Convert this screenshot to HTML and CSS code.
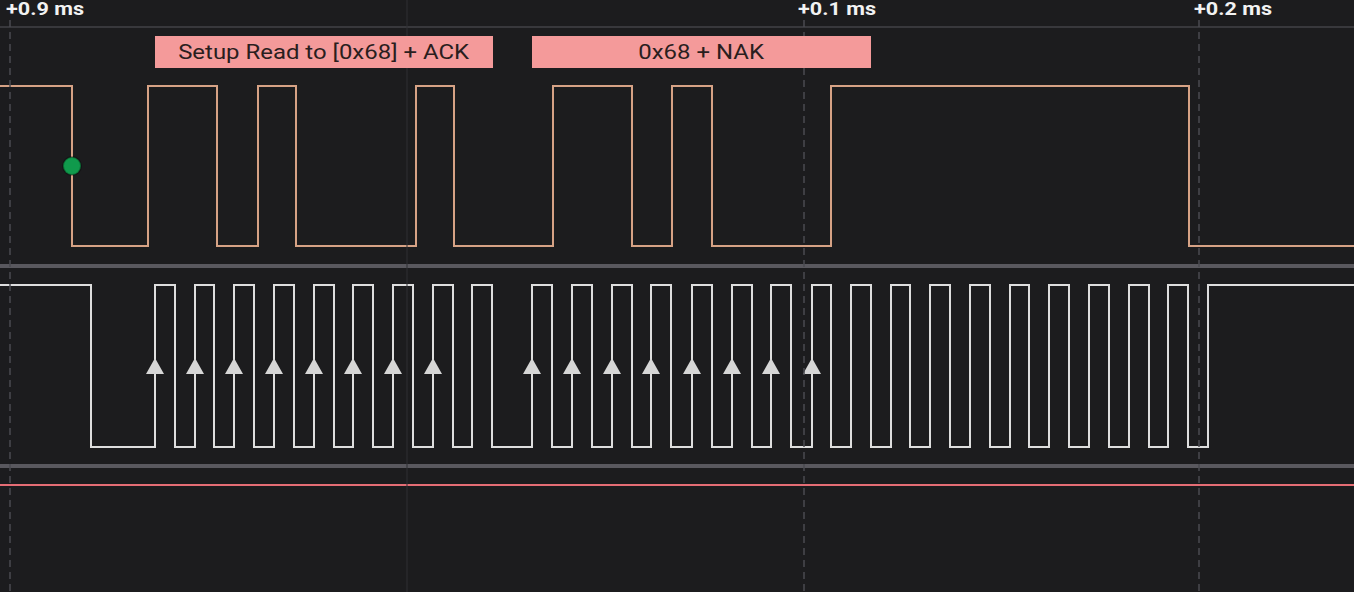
FILE: index.html
```html
<!DOCTYPE html>
<html>
<head>
<meta charset="utf-8">
<link rel="stylesheet" href="styles.css">
</head>
<body>
<div class="viewer">
  <div class="timebar">
    <span class="tlabel" style="left:6px">+0.9 ms</span>
    <span class="tlabel" style="left:798px">+0.1 ms</span>
    <span class="tlabel" style="left:1194px">+0.2 ms</span>
  </div>
  <div class="channel sda">
    <div class="frame" style="left:155px;width:338px"><span class="frame-text">Setup Read to [0x68] + ACK</span></div>
    <div class="frame" style="left:532px;width:339px"><span class="frame-text">0x68 + NAK</span></div>
    <svg class="wave" width="1354" height="236" viewBox="0 0 1354 236">
      <path class="sda-line" d="M-2 58 H72 V218 H148 V58 H217 V218 H258 V58 H296 V218 H416 V58 H454 V218 H553 V58 H632 V218 H672 V58 H712 V218 H831 V58 H1189 V218 H1360"/>
      <circle class="start-dot" cx="72" cy="138" r="9"/>
    </svg>
  </div>
  <div class="sep"></div>
  <div class="channel scl">
    <svg class="wave" width="1354" height="196" viewBox="0 0 1354 196">
      <path class="scl-line" d="M-2 17 H91 V179 H155 V17 H175 V179 H195 V17 H214 V179 H234 V17 H254 V179 H274 V17 H294 V179 H314 V17 H334 V179 H353 V17 H373 V179 H393 V17 H413 V179 H433 V17 H453 V179 H472 V17 H492 V179 H532 V17 H552 V179 H572 V17 H592 V179 H612 V17 H632 V179 H651 V17 H671 V179 H692 V17 H712 V179 H732 V17 H752 V179 H771 V17 H791 V179 H812 V17 H831 V179 H851 V17 H871 V179 H891 V17 H910 V179 H930 V17 H950 V179 H970 V17 H990 V179 H1010 V17 H1029 V179 H1049 V17 H1069 V179 H1089 V17 H1109 V179 H1129 V17 H1149 V179 H1168 V17 H1188 V179 H1208 V17 H1360"/>
      <g class="arrows">
        <path d="M155 90 L164 106 L146 106 Z"/>
        <path d="M195 90 L204 106 L186 106 Z"/>
        <path d="M234 90 L243 106 L225 106 Z"/>
        <path d="M274 90 L283 106 L265 106 Z"/>
        <path d="M314 90 L323 106 L305 106 Z"/>
        <path d="M353 90 L362 106 L344 106 Z"/>
        <path d="M393 90 L402 106 L384 106 Z"/>
        <path d="M433 90 L442 106 L424 106 Z"/>
        <path d="M532 90 L541 106 L523 106 Z"/>
        <path d="M572 90 L581 106 L563 106 Z"/>
        <path d="M612 90 L621 106 L603 106 Z"/>
        <path d="M651 90 L660 106 L642 106 Z"/>
        <path d="M692 90 L701 106 L683 106 Z"/>
        <path d="M732 90 L741 106 L723 106 Z"/>
        <path d="M771 90 L780 106 L762 106 Z"/>
        <path d="M812 90 L821 106 L803 106 Z"/>
      </g>
    </svg>
  </div>
  <div class="sep"></div>
  <div class="channel extra">
    <div class="red-line"></div>
  </div>
  <svg class="grid" width="1354" height="592" viewBox="0 0 1354 592">
    <line class="minor" x1="407" y1="0" x2="407" y2="592"/>
    <line class="major" x1="10" y1="20" x2="10" y2="592"/>
    <line class="major" x1="804" y1="20" x2="804" y2="592"/>
    <line class="major" x1="1199" y1="20" x2="1199" y2="592"/>
  </svg>
</div>
</body>
</html>
```

FILE: styles.css
```css
html, body {
  margin: 0;
  padding: 0;
  background: #1c1c1e;
  overflow: hidden;
}
.viewer {
  position: relative;
  width: 1354px;
  height: 592px;
  display: flex;
  flex-direction: column;
  font-family: Roboto, "Liberation Sans", sans-serif;
}
.timebar {
  position: relative;
  height: 26px;
  border-bottom: 2px solid #38383c;
  flex: none;
}
.tlabel {
  position: absolute;
  top: 0;
  font-size: 18px;
  font-weight: 700;
  line-height: 18px;
  color: #f2f2f2;
  white-space: nowrap;
  transform: scaleX(1.2);
  transform-origin: left center;
}
.channel {
  position: relative;
  flex: none;
}
.sda { height: 236px; }
.scl { height: 196px; }
.extra {
  flex: 1;
  padding-top: 16px;
}
.wave {
  display: block;
  position: relative;
  z-index: 1;
}
.sep {
  height: 4px;
  background: #59585e;
  flex: none;
}
.frame {
  position: absolute;
  top: 8px;
  height: 32px;
  background: #f49a9a;
  color: #2a1e1e;
  font-size: 21px;
  line-height: 32px;
  text-align: center;
  white-space: nowrap;
  z-index: 3;
  display: flex;
  justify-content: center;
}
.frame-text {
  display: inline-block;
  transform: scaleX(1.14);
}
.sda-line {
  fill: none;
  stroke: #d6a285;
  stroke-width: 2;
}
.scl-line {
  fill: none;
  stroke: #dedede;
  stroke-width: 2;
}
.arrows path {
  fill: #d6d6d6;
}
.start-dot {
  fill: #109a4c;
  stroke: rgba(0, 0, 0, 0.3);
  stroke-width: 2;
}
.red-line {
  height: 2px;
  background: #e56d75;
}
.grid {
  position: absolute;
  left: 0;
  top: 0;
  pointer-events: none;
  z-index: 2;
}
.grid .minor {
  stroke: #2f2f33;
  stroke-width: 1;
}
.grid .major {
  stroke: #4a4a50;
  stroke-width: 2;
  stroke-dasharray: 7 5;
  opacity: 0.75;
}
```
